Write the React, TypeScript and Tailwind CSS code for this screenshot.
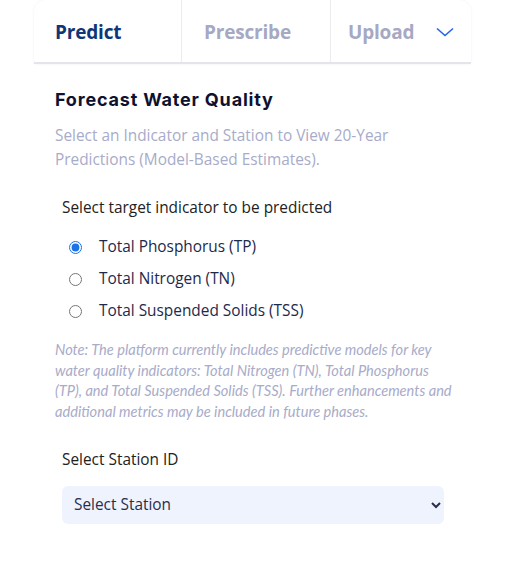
import React, { useState } from 'react';

const indicators = [
  { id: 'TP', label: 'Total Phosphorus (TP)' },
  { id: 'TN', label: 'Total Nitrogen (TN)' },
  { id: 'TSS', label: 'Total Suspended Solids (TSS)' },
];

export default function App() {
  const [target, setTarget] = useState('TP');

  return (
    <div className="min-h-screen bg-white font-['Open_Sans',sans-serif]">
      <div className="ml-[34px] w-[437px]">
        {/* Tabs */}
        <div className="flex h-[64px] rounded-t-xl border-b-2 border-[#e4e4ea] bg-white shadow-[0_0_3px_rgba(0,0,0,0.06)]">
          <button className="flex w-[147px] items-center pl-[21px] pt-[2px] text-[19px] font-bold tracking-[-0.01em] text-[#0d3778]">
            Predict
          </button>
          <button className="flex w-[149px] items-center border-l border-[#ececf0] pl-[22px] pt-[2px] text-[19px] font-bold tracking-[-0.01em] text-[#a6a8c4]">
            Prescribe
          </button>
          <div className="flex flex-1 items-center border-l border-[#ececf0] pl-[17px] pr-[16px] pt-[2px]">
            <span className="text-[19px] font-bold tracking-[-0.01em] text-[#a6a8c4]">Upload</span>
            <svg className="ml-auto h-[20px] w-[20px] text-[#2563eb]" viewBox="0 0 20 20" fill="none" stroke="currentColor" strokeWidth="1.6">
              <path d="M2 6.5 10 13.5 18 6.5" />
            </svg>
          </div>
        </div>

        {/* Content */}
        <div className="px-[21px] pt-[24px]">
          <h2 className="font-['Inter',sans-serif] text-[18px] font-bold leading-[24px] tracking-[0.045em] text-[#0e1230]">
            Forecast Water Quality
          </h2>
          <p className="mt-[12px] text-[15.4px] leading-[24px] text-[#a8abc9]">
            Select an Indicator and Station to View 20-Year Predictions (Model-Based Estimates).
          </p>

          <div className="mt-[24px] pl-[7px]">
            <p className="text-[15.4px] leading-[24px] text-[#222222]">Select target indicator to be predicted</p>
            <div className="mt-[15px] flex flex-col gap-[8px]">
              {indicators.map((ind) => (
                <label key={ind.id} className="flex h-[24px] cursor-pointer items-center text-[15.4px] text-[#1e2a4a]">
                  <input
                    type="radio"
                    name="indicator"
                    checked={target === ind.id}
                    onChange={() => setTarget(ind.id)}
                    className="ml-[7px] h-[13px] w-[13px] accent-[#1a73e8]"
                  />
                  <span className="ml-[17px]">{ind.label}</span>
                </label>
              ))}
            </div>
          </div>

          <p className="mt-[17px] w-[398px] font-['Lato',sans-serif] text-[14.6px] italic leading-[20.7px] text-[#a8abc9]">
            Note: The platform currently includes predictive models for key water quality indicators: Total
            Nitrogen (TN), Total Phosphorus (TP), and Total Suspended Solids (TSS). Further enhancements and
            additional metrics may be included in future phases.
          </p>

          <div className="mt-[25px] pl-[7px]">
            <p className="text-[15.4px] leading-[24px] text-[#222222]">Select Station ID</p>
            <select className="mt-[14px] h-[38px] w-[382px] rounded-md bg-[#eef3fe] px-[8px] text-[15.4px] text-[#2a2e4a] outline-none">
              <option>Select Station</option>
            </select>
          </div>
        </div>
      </div>
    </div>
  );
}
